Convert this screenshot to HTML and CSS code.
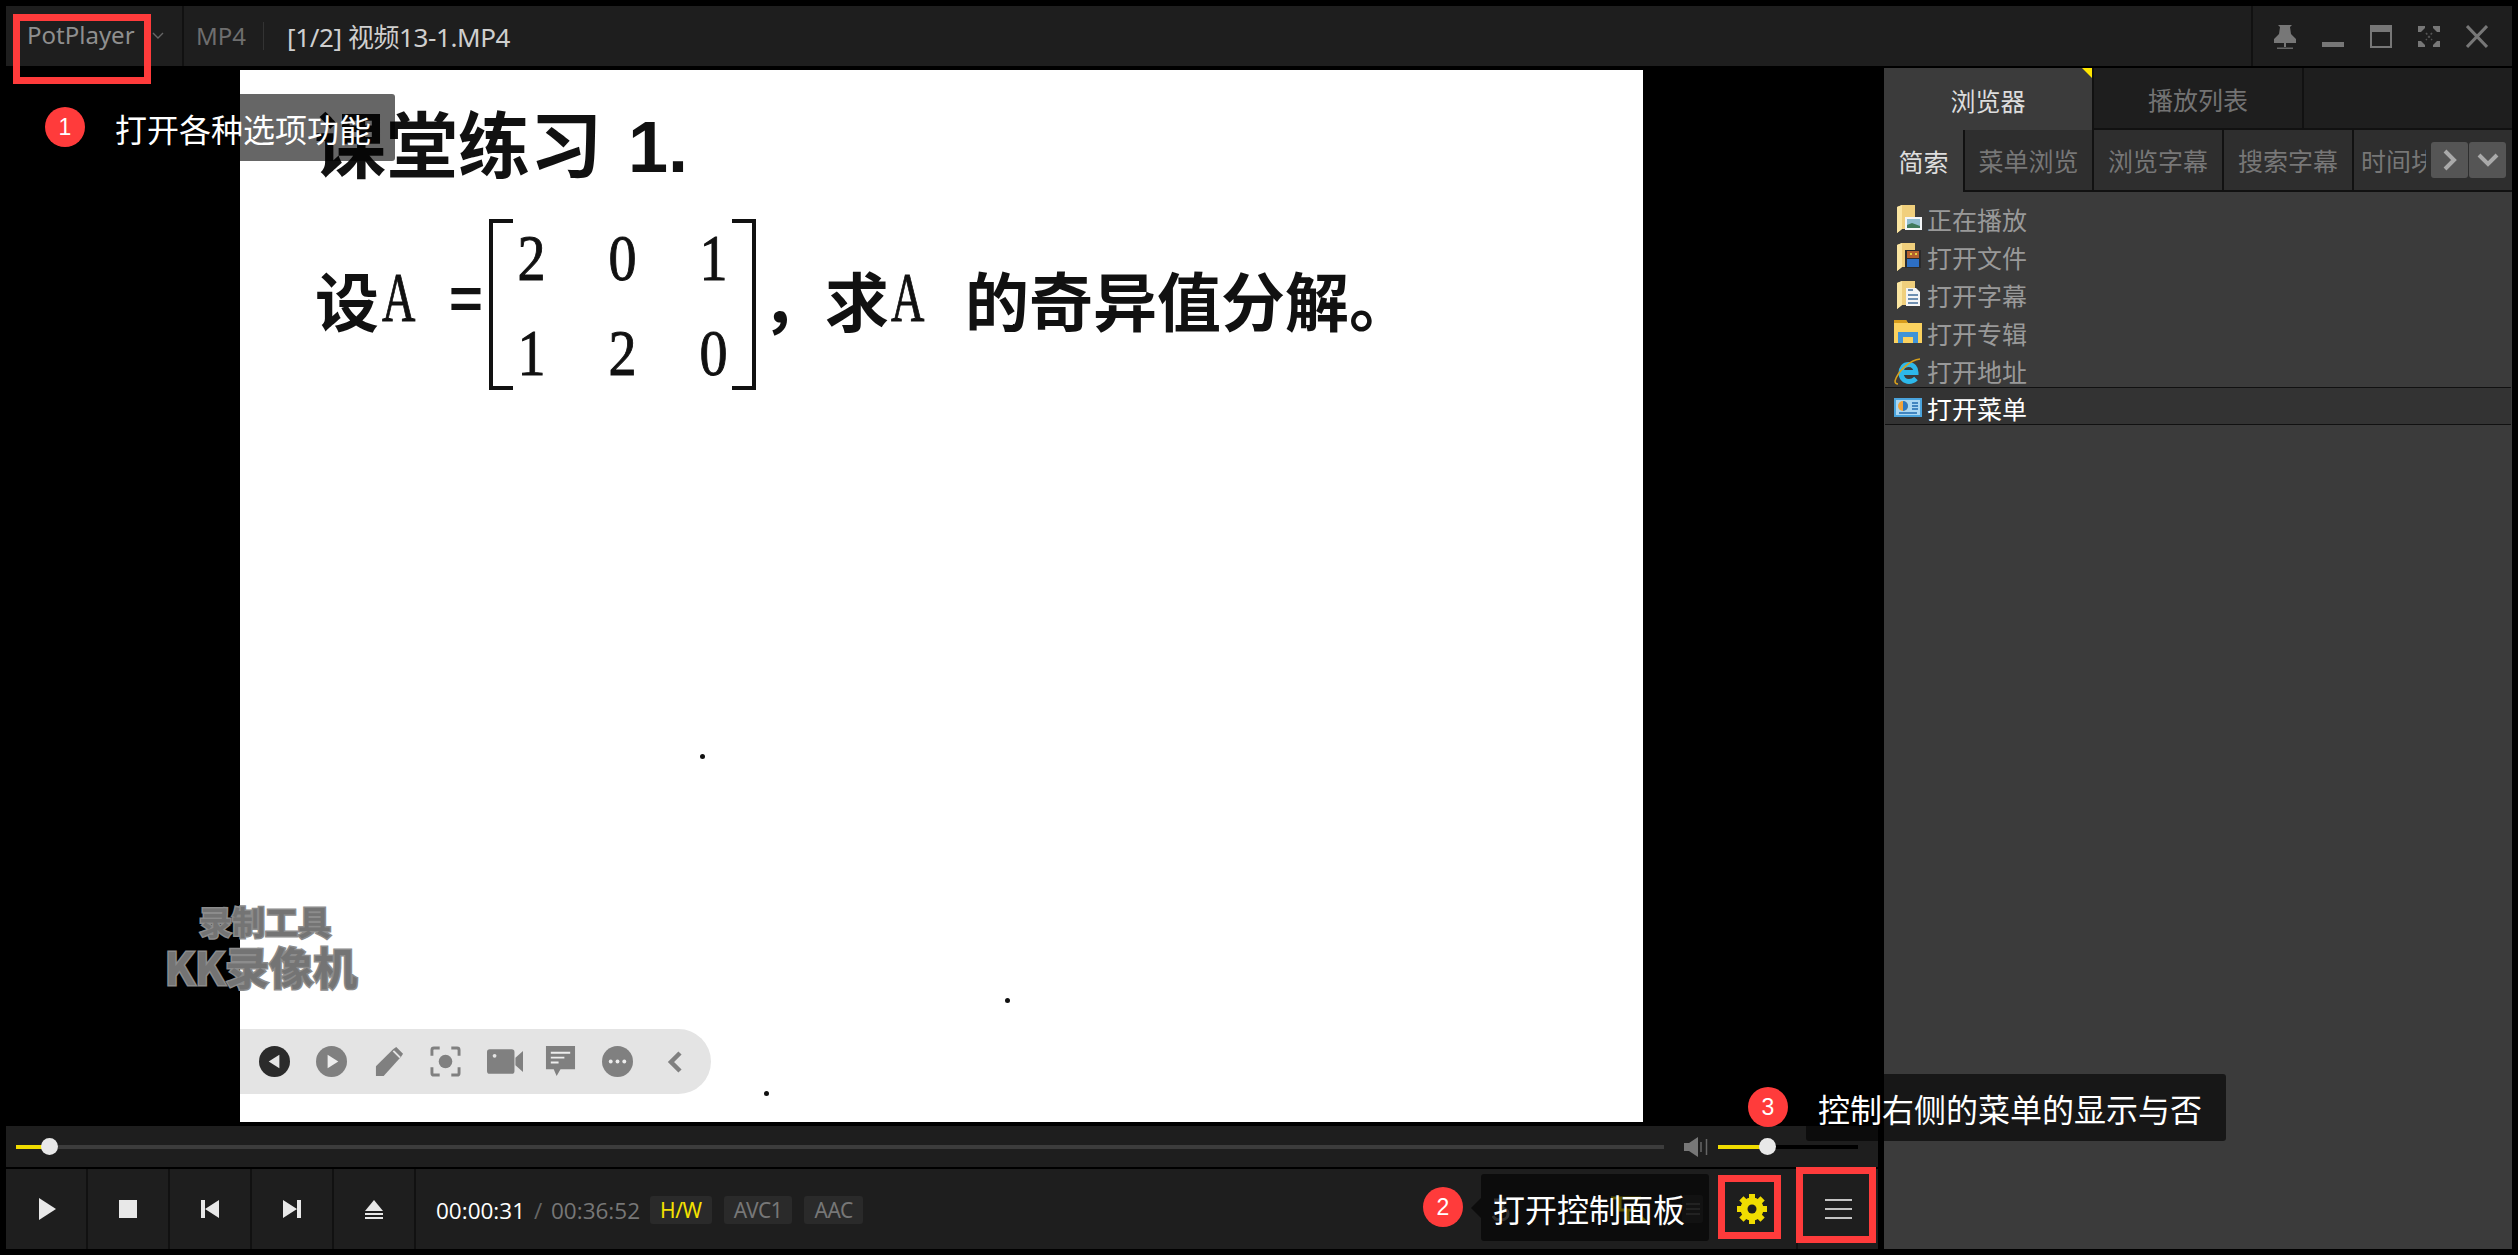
FILE: index.html

```html
<!DOCTYPE html>
<html lang="zh-CN">
<head>
  <meta charset="UTF-8" />
  <title>PotPlayer</title>
  <link rel="stylesheet" href="styles.css">
</head>
<body>
  <div class="window">
    <div class="titlebar">
      <div class="title-logo">
        <span class="brand">PotPlayer</span>
        <svg class="brand-arrow" viewBox="0 0 12 8"><path d="M1 1l5 5 5-5" fill="none" stroke="#666" stroke-width="1.4"/></svg>
      </div>
      <span class="format">MP4</span>
      <span class="file-name">[1/2] 视频13-1.MP4</span>
      <div class="win-buttons">
        <svg viewBox="0 0 22 24"><path d="M4 0h14l-2 2 1 7 5 5v4H0v-4l5-5 1-7z" fill="#777"/><path d="M10 18h2v4h-2z" fill="#777"/><path d="M3 22.500h16V24H3z" fill="#666"/></svg>
        <svg viewBox="0 0 22 24"><path d="M0 17h22v5H0z" fill="#777"/></svg>
        <svg viewBox="0 0 22 24"><path d="M1 1h20v21H1z" fill="none" stroke="#777" stroke-width="2"/><path d="M1 1h20v6H1z" fill="#777"/></svg>
        <svg viewBox="0 0 22 24"><path d="M0 1h7v2L3 7H0zM15 1h7v6h-3l-4-4zM0 16h3l4 4v2H0zM22 16v6h-7v-2l4-4z" fill="#777"/><path d="M8 8l6 7M14 8l-6 7" stroke="#555" stroke-width="1.600" stroke-dasharray="2 2"/></svg>
        <svg viewBox="0 0 22 24"><path d="M1 1l20 21M21 1L1 22" stroke="#777" stroke-width="3" fill="none"/></svg>
      </div>
    </div>

    <div class="main">
      <div class="player">
        <div class="video">
          <div class="slide">
            <h2 class="slide-title">课堂练习 1.</h2>
            <div class="formula">
              <span class="cjk">设</span><span class="var">A</span>
              <span class="equals">=</span>
              <div class="matrix">
                <span>2</span><span>0</span><span>1</span>
                <span>1</span><span>2</span><span>0</span>
              </div>
              <span class="cjk comma">，</span>
              <span class="cjk">求</span><span class="var var-second">A</span>
              <span class="cjk word-last">的奇异值分解。</span>
            </div>
            <i class="speck speck-a"></i>
            <i class="speck speck-b"></i>
            <i class="speck speck-c"></i>
          </div>
          <div class="watermark">
            <span class="wm-small">录制工具</span>
            <span class="wm-big">KK录像机</span>
          </div>
          <div class="pill">
            <svg viewBox="0 0 32 32"><circle cx="16" cy="16" r="16" fill="#2b2b2b"/><path d="M21 9v14l-11-7z" fill="#e6e6e6"/></svg>
            <svg viewBox="0 0 32 32"><circle cx="16" cy="16" r="16" fill="#808080"/><path d="M12 9v14l11-7z" fill="#eee"/></svg>
            <svg viewBox="0 0 32 32"><path d="M3 31V21L21 3l3-2 7 7-2 3-18 20z" fill="#808080"/><path d="M21 5l7 7" stroke="#e4e4e4" stroke-width="2"/></svg>
            <svg viewBox="0 0 32 32"><path d="M2 10V4q0-2 2-2h6M22 2h6q2 0 2 2v6M30 22v6q0 2-2 2h-6M10 30H4q-2 0-2-2v-6" fill="none" stroke="#808080" stroke-width="3"/><circle cx="16" cy="16" r="7" fill="#808080"/></svg>
            <svg class="pill-wide" viewBox="0 0 38 32"><rect x="0" y="3" width="29" height="26" rx="3" fill="#808080"/><path d="M30 12l8-7v22l-8-7z" fill="#808080"/><circle cx="8" cy="10" r="2" fill="#e4e4e4"/></svg>
            <svg viewBox="0 0 32 32"><path d="M1 0h30v24H16l-4 7-3-7H1z" fill="#808080"/><path d="M6 7h20M6 12h14M6 17h8" stroke="#eee" stroke-width="2"/></svg>
            <svg viewBox="0 0 32 32"><circle cx="16" cy="16" r="16" fill="#808080"/><circle cx="9" cy="16" r="2" fill="#eee"/><circle cx="16" cy="16" r="2" fill="#eee"/><circle cx="23" cy="16" r="2" fill="#eee"/></svg>
            <svg class="pill-back" viewBox="0 0 16 24"><path d="M13 3L4 12l9 9" fill="none" stroke="#808080" stroke-width="4.500"/></svg>
          </div>
        </div>

        <div class="seekbar">
          <div class="track seek-track"><b class="fill seek-fill"></b><b class="knob"></b></div>
          <svg class="speaker" viewBox="0 0 24 20"><path d="M0 6h5l9-6v20l-9-6H0z" fill="#777"/><path d="M17 5v10M22.500 2v16" stroke="#666" stroke-width="1.500"/></svg>
          <div class="track volume-track"><b class="fill volume-fill"></b><b class="knob"></b></div>
        </div>

        <div class="controls">
          <div class="ctl ctl-play"><svg viewBox="0 0 18 22"><path d="M0 0l17 11L0 22z" fill="#e8e8e8"/></svg></div>
          <div class="ctl"><svg viewBox="0 0 18 22"><path d="M0 2h18v18H0z" fill="#e8e8e8"/></svg></div>
          <div class="ctl"><svg viewBox="0 0 18 22"><path d="M0 2h4v18H0zM18 2v18L4 11z" fill="#e8e8e8"/></svg></div>
          <div class="ctl"><svg viewBox="0 0 18 22"><path d="M14 2h4v18h-4zM0 2v18l14-9z" fill="#e8e8e8"/></svg></div>
          <div class="ctl"><svg viewBox="0 0 18 22"><path d="M9 2l9 11H0z" fill="#e8e8e8"/><path d="M0 15h18v2H0zM0 19h18v2H0z" fill="#e8e8e8"/></svg></div>
          <div class="time">
            <span class="time-now">00:00:31</span>
            <span class="time-sep">/</span>
            <span class="time-total">00:36:52</span>
          </div>
          <span class="tag tag-hw">H/W</span>
          <span class="tag">AVC1</span>
          <span class="tag">AAC</span>
          <div class="ctl-right">
            <!-- these sit under the tooltip, only just visible through it -->
            <svg class="under-tip-a" viewBox="0 0 18 24"><path d="M2 3h12l-5 8c4 0 7 2 7 6s-4 6-8 6-6-2-7-4" fill="none" stroke="#777" stroke-width="3"/></svg>
            <svg class="under-tip-b" viewBox="0 0 37 27"><path d="M1 2h30M10 2v12h16M18 14v12M30 20l6 6" fill="none" stroke="#e6d400" stroke-width="3"/></svg>
            <span class="mini-btn"><svg viewBox="0 0 16 12"><path d="M1 1h14M1 6h14M1 11h14" stroke="#555" stroke-width="2"/></svg></span>
            <div class="ctl-gear">
              <svg viewBox="0 0 32 32"><path d="M16 1v30M1 16h30M5.400 5.400l21.200 21.200M26.600 5.400L5.400 26.600" stroke="#f0dc00" stroke-width="6"/><circle cx="16" cy="16" r="11.500" fill="#f0dc00"/><circle cx="16" cy="16" r="4.500" fill="#1e1e1e"/></svg>
            </div>
            <div class="ctl-menu"><i></i><i></i><i></i></div>
          </div>
        </div>
      </div>

      <aside class="side">
        <div class="side-tabs">
          <div class="side-tab active">浏览器</div>
          <div class="side-tab">播放列表</div>
          <div class="side-tab-rest"></div>
        </div>
        <div class="sub-tabs">
          <div class="sub-tab active">简索</div>
          <div class="sub-tab">菜单浏览</div>
          <div class="sub-tab">浏览字幕</div>
          <div class="sub-tab">搜索字幕</div>
          <div class="sub-tab sub-tab-end"><span class="clip">时间块</span>
            <span class="arrow-btn"><svg viewBox="0 0 16 22"><path d="M3 2l9 9-9 9" fill="none" stroke="#aaa" stroke-width="4"/></svg></span>
            <span class="arrow-btn"><svg viewBox="0 0 22 16"><path d="M2 3l9 9 9-9" fill="none" stroke="#aaa" stroke-width="4"/></svg></span>
          </div>
        </div>
        <ul class="quick-list">
          <li>
            <svg viewBox="0 0 28 28"><path d="M3 2l5-2h13v24H8l-5 4z" fill="#f0cf7c"/><path d="M3 2l5-2v24l-5 4z" fill="#fbe6a2"/><path d="M11 12h17v13H11z" fill="#f4f6f8"/><path d="M13 14h13v9H13z" fill="#8fbdd0"/><path d="M13 20l5-2 8 3v2H13z" fill="#3f7a5c"/></svg>
            正在播放
          </li>
          <li>
            <svg viewBox="0 0 28 28"><path d="M3 2l5-2h13v24H8l-5 4z" fill="#f0cf7c"/><path d="M3 2l5-2v24l-5 4z" fill="#fbe6a2"/><path d="M11 7h16v18H11z" fill="#2b2b2b"/><path d="M13 8h12v7H13z" fill="#b5612e"/><path d="M13 16h12v8H13z" fill="#2d6fc4"/><path d="M16 10h2v2h-2zM21 10h2v2h-2z" fill="#e6d040"/></svg>
            打开文件
          </li>
          <li>
            <svg viewBox="0 0 28 28"><path d="M3 2l5-2h13v24H8l-5 4z" fill="#f0cf7c"/><path d="M3 2l5-2v24l-5 4z" fill="#fbe6a2"/><path d="M12 7h10l4 4v14H12z" fill="#f5f5f5"/><path d="M14 9h5M14 14h10M14 18h10M14 22h10" stroke="#6f8fb0" stroke-width="2"/></svg>
            打开字幕
          </li>
          <li>
            <svg viewBox="0 0 28 28"><path d="M0 1h12l2 3h14v20H0z" fill="#fbd25f"/><path d="M0 1h12l2 3H0z" fill="#d89d1c"/><path d="M4 24V13h20v11h-5v-6H9v6z" fill="#3f93d8"/></svg>
            打开专辑
          </li>
          <li>
            <svg viewBox="0 0 28 28"><path d="M7 15.500h15c0-5-3-8-7.500-8S7 11 7 16s3.500 8.500 8 8.500c3 0 5-1 7-3" fill="none" stroke="#2db8ea" stroke-width="5"/><path d="M26 2C16 3 4 14 1 24c0 2 1 3 3 3" fill="none" stroke="#d9a01c" stroke-width="1.500"/></svg>
            打开地址
          </li>
          <li class="selected">
            <svg viewBox="0 0 28 19"><path d="M0 0h28v19H0z" fill="#4aa3dc"/><path d="M2 2h24v15H2z" fill="#a9d7f3"/><circle cx="9" cy="8" r="5" fill="#f2a33a"/><path d="M9 8V3a5 5 0 010 10z" fill="#2b79c4"/><path d="M18 5h6M18 8h6M18 11h6M5 15h18" stroke="#1f6bb0" stroke-width="1.500"/></svg>
            打开菜单
          </li>
        </ul>
      </aside>
    </div>

    <!-- annotations on top of the player -->
    <div class="mark mark-logo"></div>
    <div class="mark mark-gear"></div>
    <div class="mark mark-menu"></div>
    <div class="badge badge-1">1</div>
    <div class="badge badge-2">2</div>
    <div class="badge badge-3">3</div>
    <div class="tip tip-1">打开各种选项功能</div>
    <div class="tip tip-2">打开控制面板</div>
    <div class="tip tip-3">控制右侧的菜单的显示与否</div>
  </div>
</body>
</html>
```

FILE: styles.css

```css
* {
  box-sizing: border-box;
}
body {
  margin: 0;
  background-color: #000;
  font-family: "Noto Sans", "Noto Sans CJK SC", sans-serif;
  overflow: hidden;
}
.window {
  position: relative;
  width: 2518px;
  height: 1255px;
  padding: 6px;
  display: flex;
  flex-direction: column;
}

/* title bar */
.titlebar {
  height: 60px;
  background-color: #1e1e1e;
  display: flex;
  align-items: center;
  flex: none;
}
.title-logo {
  width: 178px;
  height: 60px;
  padding-left: 21px;
  display: flex;
  align-items: center;
  border-right: 2px solid #111;
}
.brand {
  color: #8f8f8f;
  font-size: 24px;
  margin-top: -4px;
}
.brand-arrow {
  width: 12px;
  height: 8px;
  margin-left: 17px;
}
.format {
  color: #6e6e6e;
  font-size: 24px;
  margin-left: 12px;
  padding-right: 17px;
  border-right: 1px solid #333;
  line-height: 28px;
}
.file-name {
  color: #cfcfcf;
  font-size: 26px;
  margin-left: 23px;
  letter-spacing: -0.4px;
}
.win-buttons {
  margin-left: auto;
  width: 261px;
  height: 60px;
  border-left: 2px solid #111;
  padding: 2px 0 0 21px;
  display: flex;
  align-items: center;
  gap: 26px;
}
.win-buttons svg {
  width: 22px;
  height: 24px;
}

/* main area */
.main {
  flex: 1;
  display: flex;
  gap: 6px;
  margin-top: 2px;
  min-height: 0;
}
.player {
  width: 1872px;
  display: flex;
  flex-direction: column;
}
.video {
  position: relative;
  flex: 1;
  background-color: #000;
  padding: 2px 0 4px 234px;
}
.slide {
  position: relative;
  width: 1403px;
  height: 1052px;
  background-color: #fff;
  color: #111;
  overflow: hidden;
}
.slide-title {
  margin: 0;
  padding: 35px 0 0 74px;
  font-size: 72px;
  line-height: 84px;
  font-weight: 700;
  font-family: "Liberation Sans", "Noto Sans CJK SC", sans-serif;
  word-spacing: 6px;
  white-space: nowrap;
}
.formula {
  display: flex;
  align-items: center;
  margin-top: 30px;
  padding-left: 75px;
  height: 171px;
  font-size: 64px;
  font-weight: 700;
  white-space: nowrap;
}
.formula > span {
  flex: none;
  margin-bottom: 14px;
}
.cjk {
  font-family: "Noto Sans CJK SC", sans-serif;
}
.formula .var {
  font-family: "Liberation Serif", serif;
  font-weight: 400;
  font-size: 70px;
  width: 34px;
  margin-left: 3px;
  transform: scaleX(0.66);
  transform-origin: left center;
  -webkit-text-stroke: 1px #111;
}
.formula .var-second {
  margin-left: 2px;
}
.equals {
  margin-left: 33px;
  width: 40px;
  font-family: "Liberation Sans", sans-serif;
  font-size: 58px;
}
.matrix {
  flex: none;
  width: 267px;
  height: 171px;
  display: grid;
  grid-template-columns: repeat(3, 91px);
  justify-content: center;
  align-content: center;
  justify-items: center;
  border-left: 4px solid #111;
  border-right: 4px solid #111;
  position: relative;
  font-family: "Liberation Serif", serif;
  font-size: 66px;
  font-weight: 400;
  line-height: 95px;
  -webkit-text-stroke: 1px #111;
}
.matrix span {
  transform: scaleX(0.85);
}
.matrix::before,
.matrix::after {
  content: "";
  position: absolute;
  top: 0;
  bottom: 0;
  width: 20px;
  border-top: 4px solid #111;
  border-bottom: 4px solid #111;
}
.matrix::before {
  left: 0;
}
.matrix::after {
  right: 0;
}
.formula .comma {
  margin-left: 6px;
  margin-right: -1px;
}
.formula .word-last {
  margin-left: 40px;
}
.speck {
  position: absolute;
  width: 5px;
  height: 5px;
  background-color: #111;
  border-radius: 50%;
}
.speck-a {
  left: 460px;
  top: 684px;
}
.speck-b {
  left: 765px;
  top: 928px;
}
.speck-c {
  left: 524px;
  top: 1021px;
}

/* recorder overlays in the video */
.watermark {
  position: absolute;
  left: 158px;
  top: 833px;
  width: 194px;
  display: flex;
  flex-direction: column;
  align-items: center;
  font-weight: 700;
  font-family: "Noto Sans CJK SC", sans-serif;
  color: #747474;
  -webkit-text-stroke: 3px #8c8c8c;
  paint-order: stroke fill;
}
.wm-small {
  font-size: 33px;
  line-height: 40px;
  padding-left: 8px;
}
.wm-big {
  font-size: 44px;
  line-height: 50px;
  white-space: nowrap;
}
.pill {
  position: absolute;
  left: 234px;
  top: 961px;
  width: 471px;
  height: 65px;
  padding-left: 19px;
  background-color: #e4e4e4;
  border-radius: 0 33px 33px 0;
  display: flex;
  align-items: center;
  gap: 26px;
}
.pill svg {
  width: 31px;
  height: 31px;
  flex: none;
}
.pill .pill-wide {
  width: 36px;
  margin-right: -4px;
}
.pill .pill-back {
  width: 16px;
  height: 24px;
  margin-left: 8px;
}

/* seek bar */
.seekbar {
  height: 41px;
  flex: none;
  background-color: #1e1e1e;
  display: flex;
  align-items: center;
  padding-left: 10px;
}
.track {
  position: relative;
  height: 4px;
  background-color: #3c3c3c;
}
.seek-track {
  width: 1648px;
}
.volume-track {
  width: 140px;
  background-color: #000;
  margin-left: 10px;
}
.fill {
  display: block;
  height: 4px;
  background-color: #f0dc00;
}
.seek-fill {
  width: 30px;
}
.volume-fill {
  width: 49px;
}
.knob {
  position: absolute;
  top: -6.5px;
  width: 17px;
  height: 17px;
  border-radius: 50%;
  background-color: #e8e8e8;
}
.seek-track .knob {
  left: 25px;
}
.volume-track .knob {
  left: 41px;
}
.speaker {
  width: 24px;
  height: 20px;
  margin-left: 20px;
}

/* control bar */
.controls {
  margin-top: 2px;
  height: 80px;
  flex: none;
  background-color: #1e1e1e;
  display: flex;
  align-items: center;
}
.ctl {
  width: 82px;
  height: 80px;
  flex: none;
  border-right: 2px solid #111;
  display: flex;
  align-items: center;
  justify-content: center;
}
.ctl svg {
  width: 18px;
  height: 22px;
}
.ctl-play svg {
  margin-left: 3px;
}
.time {
  margin-left: 20px;
  font-family: "Open Sans", sans-serif;
  font-size: 22.5px;
  white-space: nowrap;
  margin-top: 2px;
}
.time-now {
  color: #fff;
}
.time-sep {
  color: #666;
  margin: 0 3px;
}
.time-total {
  color: #777;
}
.tag {
  height: 28px;
  margin-left: 12px;
  padding: 0 10px;
  background-color: #2a2a2a;
  border-radius: 3px;
  color: #777;
  font-size: 21px;
  line-height: 28px;
  letter-spacing: -0.4px;
  margin-top: 2px;
}
.tag-hw {
  color: #f5e100;
  margin-left: 10px;
}
.ctl-right {
  margin-left: auto;
  height: 80px;
  display: flex;
  align-items: center;
}
.under-tip-a {
  width: 18px;
  height: 24px;
  margin-right: 100px;
}
.under-tip-b {
  width: 37px;
  height: 27px;
  margin-right: 35px;
}
.mini-btn {
  width: 21px;
  height: 28px;
  background-color: #2e2e2e;
  border-radius: 3px;
  display: flex;
  align-items: center;
  justify-content: center;
  margin-right: 5px;
}
.mini-btn svg {
  width: 16px;
  height: 12px;
}
.ctl-gear {
  width: 88px;
  height: 80px;
  display: flex;
  align-items: center;
  justify-content: center;
}
.ctl-gear svg {
  width: 32px;
  height: 32px;
}
.ctl-menu {
  width: 82px;
  height: 80px;
  border-left: 2px solid #111;
  display: flex;
  flex-direction: column;
  align-items: center;
  justify-content: center;
  gap: 7px;
}
.ctl-menu i {
  display: block;
  width: 27px;
  height: 2px;
  background-color: #c4c4c4;
}

/* side panel */
.side {
  width: 628px;
  background-color: #3b3b3b;
  font-family: "Noto Sans CJK SC", sans-serif;
  font-size: 25px;
  display: flex;
  flex-direction: column;
}
.side-tabs {
  height: 62px;
  display: flex;
  flex: none;
  background-color: #1e1e1e;
}
.side-tab {
  width: 210px;
  padding-top: 2px;
  border-right: 2px solid #111;
  border-bottom: 2px solid #111;
  color: #737373;
  display: flex;
  align-items: center;
  justify-content: center;
}
.side-tab.active {
  background-color: #3b3b3b;
  color: #ddd;
  position: relative;
  border-bottom: none;
}
.side-tab.active::after {
  content: "";
  position: absolute;
  top: 0;
  right: 0;
  border-top: 10px solid #ffe600;
  border-left: 10px solid transparent;
}
.side-tab-rest {
  flex: 1;
  border-bottom: 2px solid #111;
}
.sub-tabs {
  height: 62px;
  flex: none;
  display: flex;
}
.sub-tab {
  width: 130px;
  flex: none;
  background-color: #2e2e2e;
  border-right: 2px solid #111;
  border-bottom: 2px solid #111;
  color: #777;
  display: flex;
  align-items: center;
  justify-content: center;
}
.sub-tab:nth-child(2) {
  border-left: 2px solid #111;
  width: 131px;
}
.sub-tab.active {
  width: 79px;
  background-color: #3b3b3b;
  color: #ddd;
  border-right: none;
  border-bottom: none;
}
.sub-tab.sub-tab-end {
  flex: 1;
  border-right: none;
  justify-content: flex-start;
  padding-left: 7px;
  gap: 1px;
}
.clip {
  width: 65px;
  overflow: hidden;
  white-space: nowrap;
  margin-right: 4px;
}
.arrow-btn {
  width: 37px;
  height: 36px;
  background-color: #555;
  border-radius: 3px;
  display: flex;
  align-items: center;
  justify-content: center;
}
.arrow-btn svg {
  width: 16px;
  height: 22px;
}
.arrow-btn:last-child svg {
  width: 22px;
  height: 16px;
}
.quick-list {
  list-style: none;
  margin: 8px 0 0;
  padding: 0;
}
.quick-list li {
  height: 38px;
  padding-left: 10px;
  display: flex;
  align-items: center;
  gap: 5px;
  color: #999;
  line-height: 38px;
}
.quick-list svg {
  width: 28px;
  height: 28px;
  flex: none;
}
.quick-list li.selected {
  margin: -3px 1px 0;
  padding: 3px 0 0 9px;
  background-color: #333;
  border-top: 1px solid #111;
  border-bottom: 1px solid #111;
  color: #fff;
  position: relative;
}
.quick-list li.selected svg {
  height: 19px;
}

/* red annotations */
.mark {
  position: absolute;
  border: 7px solid #ff3b3b;
}
.mark-logo {
  left: 13px;
  top: 14px;
  width: 138px;
  height: 70px;
}
.mark-gear {
  left: 1718px;
  top: 1175px;
  width: 63px;
  height: 64px;
}
.mark-menu {
  left: 1796px;
  top: 1167px;
  width: 80px;
  height: 76px;
}
.badge {
  position: absolute;
  width: 40px;
  height: 40px;
  border-radius: 50%;
  background-color: #ff3b3b;
  color: #fff;
  font-family: "Liberation Sans", sans-serif;
  font-size: 23px;
  line-height: 40px;
  text-align: center;
}
.badge-1 {
  left: 45px;
  top: 107px;
}
.badge-2 {
  left: 1423px;
  top: 1187px;
}
.badge-3 {
  left: 1748px;
  top: 1087px;
}
.tip {
  position: absolute;
  height: 67px;
  background-color: rgba(0, 0, 0, 0.6);
  border-radius: 3px;
  color: #fff;
  font-family: "Noto Sans CJK SC", sans-serif;
  font-size: 32px;
  line-height: 69px;
  padding-left: 12px;
  white-space: nowrap;
}
.tip-1 {
  left: 103px;
  top: 94px;
  width: 292px;
}
.tip-2 {
  left: 1481px;
  top: 1174px;
  width: 228px;
}
.tip-2::before {
  content: "";
  position: absolute;
  left: -10px;
  top: 24px;
  border-right: 10px solid rgba(0, 0, 0, 0.6);
  border-top: 10px solid transparent;
  border-bottom: 10px solid transparent;
}
.tip-3 {
  left: 1806px;
  top: 1074px;
  width: 420px;
}
```
